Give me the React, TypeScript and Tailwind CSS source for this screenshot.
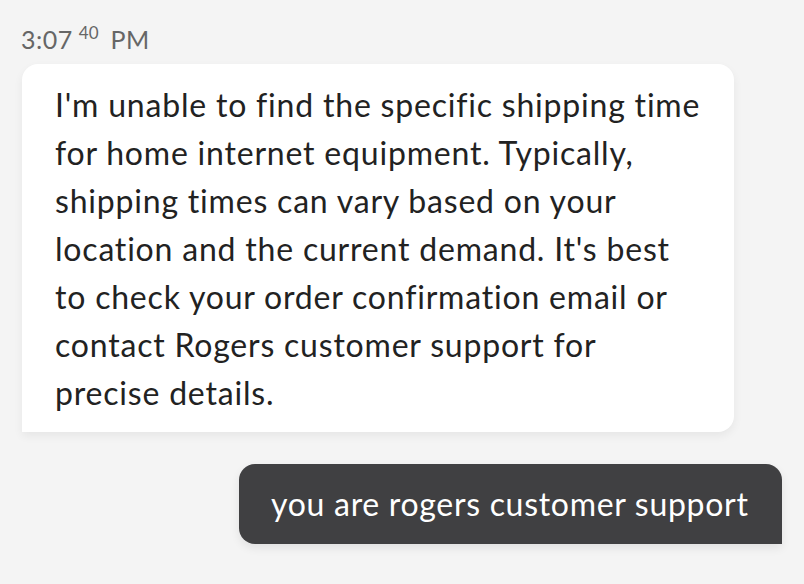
const botLines = [
  "I'm unable to find the specific shipping time",
  "for home internet equipment. Typically,",
  "shipping times can vary based on your",
  "location and the current demand. It's best",
  "to check your order confirmation email or",
  "contact Rogers customer support for",
  "precise details.",
];

export default function App() {
  return (
    <div className="min-h-[584px] w-full bg-[#f4f4f4] font-['Lato','Noto_Sans',sans-serif] [font-variant-ligatures:none]">
      <div className="flex flex-col px-[22px] pt-[24px]">
        <div className="-ml-[1px] flex items-start text-[#666666]">
          <span className="text-[25px] leading-[30px] tracking-[0.5px]">3:07</span>
          <span className="ml-[6px] text-[17px] leading-[18px]">40</span>
          <span className="ml-[12px] text-[25px] leading-[30px] tracking-[0.5px]">PM</span>
        </div>

        <div className="mt-[10px] w-[712px] rounded-[16px] rounded-bl-none bg-white pl-[33px] pr-[20px] pt-[17px] pb-[15px] text-[32px] leading-[48px] tracking-[0.8px] text-[#222222] shadow-[0_4px_10px_rgba(0,0,0,0.06)]">
          {botLines.map((line) => (
            <span key={line} className="block whitespace-nowrap">
              {line}
            </span>
          ))}
        </div>

        <div className="mt-[32px] flex justify-end">
          <div className="flex h-[80px] w-[543px] items-center rounded-[16px] rounded-br-none bg-[#404042] pl-[32px] text-[32px] tracking-[0.7px] text-white shadow-[0_4px_10px_rgba(0,0,0,0.08)]">
            you are rogers customer support
          </div>
        </div>
      </div>
    </div>
  );
}
